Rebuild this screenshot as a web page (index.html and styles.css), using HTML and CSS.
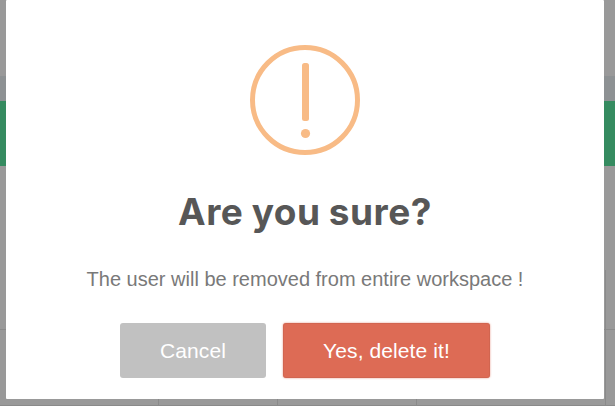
FILE: index.html
```html
<!DOCTYPE html>
<html lang="en">
<head>
<meta charset="utf-8">
<title>Confirm</title>
<link rel="stylesheet" href="styles.css">
</head>
<body>
<div class="page">
  <div class="top"></div>
  <div class="strip"></div>
  <div class="banner"></div>
  <div class="space"></div>
  <div class="table">
    <i></i><i></i><i></i><i></i><i></i>
    <i></i><i></i><i></i><i></i><i></i>
  </div>
</div>
<div class="modal" role="dialog">
  <svg class="icon" width="110" height="110" viewBox="0 0 110 110">
    <circle cx="55" cy="55" r="52.5" fill="none" stroke="#f8bb86" stroke-width="5"/>
    <rect x="52" y="18" width="7" height="58" rx="2.5" fill="#f8bb86"/>
    <circle cx="55.5" cy="88.5" r="4.6" fill="#f8bb86"/>
  </svg>
  <h2 class="title">Are you sure?</h2>
  <p class="text">The user will be removed from entire workspace !</p>
  <div class="actions">
    <button class="btn cancel">Cancel</button>
    <button class="btn confirm">Yes, delete it!</button>
  </div>
</div>
</body>
</html>
```
FILE: styles.css
```css
* { box-sizing: border-box; }
body {
  margin: 0;
  height: 406px;
  overflow: hidden;
  position: relative;
  font-family: "Liberation Sans", Arial, sans-serif;
  background: #999;
}
.page { display: flex; flex-direction: column; height: 406px; }
.top { height: 76px; }
.strip { height: 25px; background: #8d9193; }
.banner { height: 65px; background: #358b60; }
.space { height: 104px; }
.table {
  flex: 1;
  display: grid;
  grid-template-columns: 159px 119px 139px 189px 1fr;
  grid-template-rows: 60px 76px;
}
.table i {
  border-right: 1px solid #8a8a8a;
  border-bottom: 1px solid #8a8a8a;
}
.table i:nth-child(5n) { border-right: 0; }
.modal {
  position: absolute;
  left: 6px;
  top: 0;
  width: 598px;
  height: 399px;
  padding-top: 45px;
  background: #fff;
  border-radius: 1px;
  display: flex;
  flex-direction: column;
  align-items: center;
}
.icon { display: block; flex: none; }
.title {
  margin: 35px 0 0;
  height: 44px;
  font: 750 37px/44px Inter, sans-serif;
  letter-spacing: 0.5px;
  word-spacing: -1px;
  color: #575757;
  white-space: nowrap;
}
.text {
  margin: 33px 0 0;
  font-size: 20px;
  line-height: 24px;
  color: #797979;
  white-space: nowrap;
}
.actions { display: flex; gap: 17px; margin-top: 32px; }
.btn {
  height: 55px;
  padding: 0;
  border: 0;
  border-radius: 3px;
  color: #fff;
  font: 21px/55px "Liberation Sans", Arial, sans-serif;
  letter-spacing: 0.1px;
}
.cancel { width: 146px; background: #c1c1c1; }
.confirm {
  width: 207px;
  background: #dd6b55;
  box-shadow: 0 0 2px rgba(221, 107, 85, 0.8), inset 0 0 0 1px rgba(0, 0, 0, 0.05);
}
```
